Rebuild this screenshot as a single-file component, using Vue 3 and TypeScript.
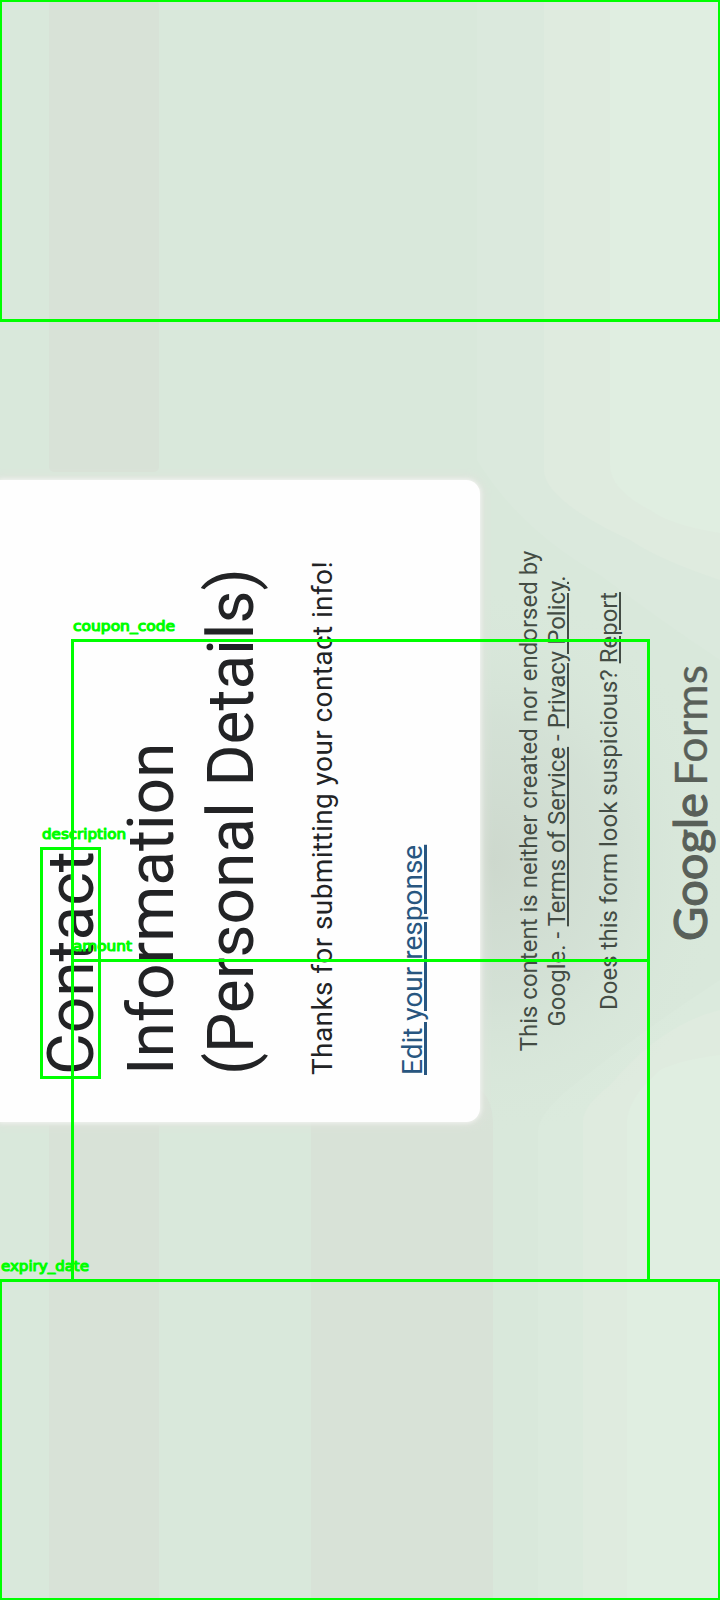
<script setup lang="ts">
interface Region { x: number; y: number; w: number; h: number }
interface Tag { text: string; x: number; y: number; width: number }

const regions: Region[] = [
  { x: 0.5, y: 0.5, w: 719, h: 320 },
  { x: 72.5, y: 640.5, w: 576, h: 320 },
  { x: 72.5, y: 960.5, w: 576, h: 320 },
  { x: 41.5, y: 848.5, w: 58, h: 229 },
  { x: 0.5, y: 1280.5, w: 719, h: 319 },
]
const tags: Tag[] = [
  { text: 'coupon_code', x: 73, y: 631, width: 102 },
  { text: 'description', x: 42, y: 839, width: 84 },
  { text: 'amount', x: 73, y: 951, width: 59 },
  { text: 'expiry_date', x: 1, y: 1271, width: 88 },
]
</script>

<template>
  <main class="screen">
    <svg class="layer" viewBox="0 0 720 1600" aria-hidden="true">
      <defs>
        <radialGradient id="glow">
          <stop offset="0" stop-color="#cdd8cd" />
          <stop offset="0.5" stop-color="#d2dfd4" stop-opacity="0.8" />
          <stop offset="1" stop-color="#d9e8db" stop-opacity="0" />
        </radialGradient>
      </defs>
      <rect width="720" height="1600" fill="#d9e8db" />
      <rect x="49" width="110" height="472" rx="5" fill="#d8e2d7" />
      <rect x="49" y="1125" width="110" height="475" fill="#d8e2d7" />
      <path d="M311 1100H480V1090Q493 1100 493 1125V1600H311Z" fill="#d8e2d7" />
      <path d="M477 0H720V660Q660 620 600 575Q520 530 477 460Z" fill="#dbe9dd" />
      <path d="M544 0H720V580Q660 560 630 540Q544 500 544 470Z" fill="#dfebdf" />
      <path d="M610 0H720V533Q670 525 650 510Q610 490 610 465Z" fill="#e0eee1" />
      <path d="M538 1600V1130Q540 1110 580 1080Q650 1025 720 980V1600Z" fill="#dbeadd" />
      <path d="M583 1600V1120Q584 1105 610 1085Q660 1025 720 1010V1600Z" fill="#dfebdf" />
      <path d="M627 1600V1120Q630 1095 660 1070Q680 1060 720 1055V1600Z" fill="#e0eee1" />
      <ellipse cx="490" cy="860" rx="240" ry="275" fill="url(#glow)" />
    </svg>

    <div class="stage">
      <section class="card">
        <h1>Contact<br />Information<br />(Personal Details)</h1>
        <p class="thanks">Thanks for submitting your contact info!</p>
        <p class="edit"><a>Edit your response</a></p>
      </section>
      <footer>
        <p class="l1">This content is neither created nor endorsed by</p>
        <p class="l2">Google. - <a>Terms of Service</a> - <a>Privacy Policy</a>.</p>
        <p class="l3">Does this form look suspicious? <a>Report</a></p>
        <svg class="logo" width="300" height="72" viewBox="0 0 300 72" aria-label="Google Forms">
          <text class="google" x="10" y="56" textLength="148" lengthAdjust="spacingAndGlyphs">Google</text>
          <text class="forms" x="165" y="56" textLength="121" lengthAdjust="spacingAndGlyphs">Forms</text>
        </svg>
      </footer>
    </div>

    <svg class="layer marks" viewBox="0 0 720 1600">
      <rect v-for="(r, i) in regions" :key="i" :x="r.x" :y="r.y" :width="r.w" :height="r.h" />
      <text v-for="t in tags" :key="t.text" :x="t.x" :y="t.y" :textLength="t.width" lengthAdjust="spacingAndGlyphs">{{ t.text }}</text>
    </svg>
  </main>
</template>

<style>
body { margin: 0; }
</style>

<style scoped>
.screen { position: relative; width: 720px; height: 1600px; overflow: hidden; font-family: Roboto, sans-serif; }
.layer { position: absolute; top: 0; left: 0; width: 720px; height: 1600px; }
.stage { position: relative; width: 1600px; height: 720px; transform-origin: 0 0; transform: translateY(1600px) rotate(-90deg); }
.card { box-sizing: border-box; width: 642px; height: 480px; margin-left: 478px; padding: 32px 0 0 47px; background: #fefefe; border-radius: 0 0 14px 14px; box-shadow: 0 0 4px 1px #f3f5f2, 0 0 10px 4px #dfe3dc; white-space: nowrap; display: flow-root; }
h1 { margin: 0; font-size: 64px; line-height: 80px; font-weight: 400; color: #222325; }
p { margin: 0; white-space: nowrap; }
.thanks { margin-top: 31px; font-size: 28px; line-height: 40px; letter-spacing: 0.4px; color: #222325; }
.edit { margin-top: 50px; font-size: 28px; line-height: 40px; color: #285680; }
a { text-decoration: underline; text-decoration-thickness: 2px; text-underline-offset: 2px; }
.edit a { text-decoration-thickness: 3px; }
footer { display: flex; flex-direction: column; align-items: center; padding: 35px 2px 0 0; font-size: 24px; line-height: 28px; color: #434c44; }
.l3 { margin-top: 24px; }
.logo { flex: none; font-family: Lato, sans-serif; fill: #596059; margin-top: 28px; }
.google { font-size: 47px; font-weight: 400; stroke: #596059; stroke-width: 1.2px; }
.forms { font-size: 45px; font-weight: 400; stroke: #596059; stroke-width: 0.3px; }
.marks rect { fill: none; stroke: #00ff00; stroke-width: 3px; }
.marks text { font-family: "DejaVu Sans", sans-serif; font-size: 13.5px; fill: #00ff00; stroke: #00ff00; stroke-width: 1.1px; stroke-linejoin: round; }
</style>
